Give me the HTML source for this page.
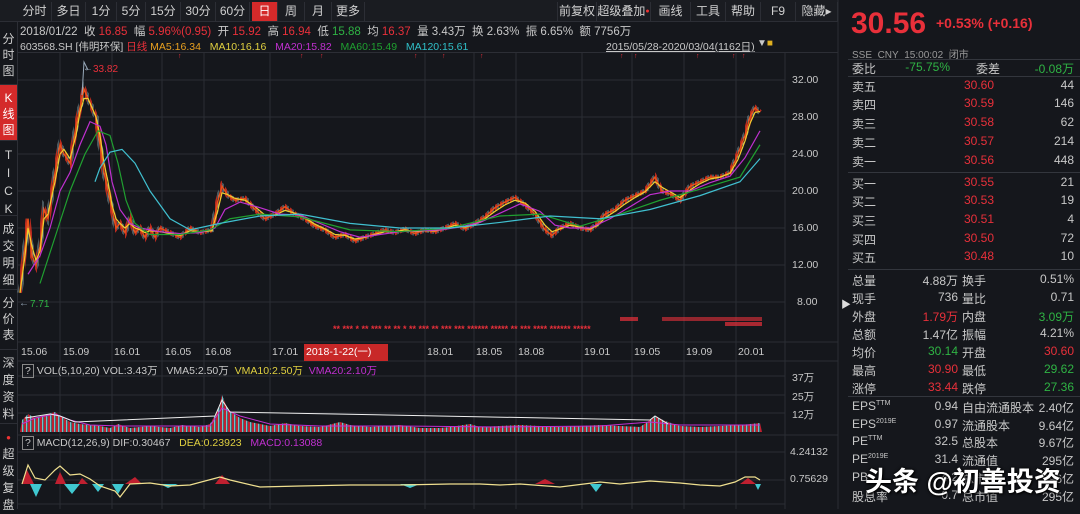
<!DOCTYPE html>
<html><head><meta charset="utf-8">
<style>
*{margin:0;padding:0;box-sizing:border-box}
body{width:1080px;height:509px;background:#15171c;overflow:hidden;position:relative;font-family:"Liberation Sans","Noto Sans CJK SC",sans-serif;color:#c8c8c8;font-size:11px}
.a{position:absolute;white-space:nowrap}
.r{color:#e8303a}.g{color:#2fb344}.y{color:#e0d040}.o{color:#e8a020}.m{color:#c030d0}.gg{color:#1fa030}.c{color:#30c0c8}
.tab{position:absolute;top:2px;height:19px;line-height:19px;font-size:12px;color:#d0d0d0;text-align:center;border-right:1px solid #2c2e35}
.side{position:absolute;left:0;width:17px;font-size:12px;color:#d0d0d0;text-align:center;line-height:16px;border-bottom:1px solid #2c2e35}
.row{position:absolute;left:852px;width:222px;height:18px;font-size:12px}
.row span{position:absolute}
</style></head><body>
<div class="a" style="left:0;top:0;width:838px;height:22px;background:#1a1c21;border-bottom:1px solid #2c2e35"></div>
<div class="tab" style="left:18px;width:34px">分时</div>
<div class="tab" style="left:52px;width:34px">多日</div>
<div class="tab" style="left:86px;width:31px">1分</div>
<div class="tab" style="left:117px;width:29px">5分</div>
<div class="tab" style="left:146px;width:35px">15分</div>
<div class="tab" style="left:181px;width:35px">30分</div>
<div class="tab" style="left:216px;width:34px">60分</div>
<div class="tab" style="left:252px;width:26px;background:#d42a2a;color:#fff">日</div>
<div class="tab" style="left:278px;width:27px">周</div>
<div class="tab" style="left:305px;width:27px">月</div>
<div class="tab" style="left:332px;width:33px">更多</div>
<div class="tab" style="left:557px;width:40px;border-left:1px solid #2c2e35">前复权</div>
<div class="tab" style="left:597px;width:54px">超级叠加<span style="color:#e33;font-size:7px;vertical-align:top">●</span></div>
<div class="tab" style="left:651px;width:40px">画线</div>
<div class="tab" style="left:691px;width:35px">工具</div>
<div class="tab" style="left:726px;width:35px">帮助</div>
<div class="tab" style="left:761px;width:35px">F9</div>
<div class="tab" style="left:796px;width:42px">隐藏▸</div>

<div class="a" style="left:20px;top:23px;font-size:11.5px">2018/01/22&nbsp; 收 <span class="r">16.85</span>&nbsp; 幅 <span class="r">5.96%(0.95)</span>&nbsp; 开 <span class="r">15.92</span>&nbsp; 高 <span class="r">16.94</span>&nbsp; 低 <span class="g">15.88</span>&nbsp; 均 <span class="r">16.37</span>&nbsp; 量 3.43万&nbsp; 换 2.63%&nbsp; 振 6.65%&nbsp; 额 7756万</div>
<div class="a" style="left:20px;top:39px;font-size:10.5px">603568.SH [伟明环保] <span class="r">日线</span> <span class="o">MA5:16.34</span>&nbsp;&nbsp; <span class="y">MA10:16.16</span>&nbsp;&nbsp; <span class="m">MA20:15.82</span>&nbsp;&nbsp; <span class="gg">MA60:15.49</span>&nbsp;&nbsp; <span class="c">MA120:15.61</span></div>
<div class="a" style="left:606px;top:39px;font-size:10.5px;text-decoration:underline">2015/05/28-2020/03/04(1162日)</div>
<div class="a" style="left:757px;top:38px;font-size:10px">▼<span style="color:#e0b020">■</span></div>
<div class="a" style="left:18px;top:52px;width:820px;height:1px;background:#2c2e35"></div>

<div class="a" style="left:17px;top:22px;width:1px;height:487px;background:#2c2e35"></div>
<div class="side" style="top:25px;height:60px;padding-top:6px">分<br>时<br>图</div>
<div class="side" style="top:85px;height:56px;background:#d42a2a;color:#fff;padding-top:5px">K<br>线<br>图</div>
<div class="side" style="top:141px;height:75px;padding-top:5px;line-height:18px">T<br>I<br>C<br>K</div>
<div class="side" style="top:216px;height:74px;padding-top:5px;line-height:17px">成<br>交<br>明<br>细</div>
<div class="side" style="top:290px;height:60px;padding-top:5px">分<br>价<br>表</div>
<div class="side" style="top:352px;height:72px;padding-top:3px;line-height:17px">深<br>度<br>资<br>料</div>
<div class="side" style="top:424px;height:85px;padding-top:4px;line-height:17px;border:none"><span style="color:#e33;font-size:8px">●</span><br>超<br>级<br>复<br>盘</div>

<svg class="a" style="left:0;top:0" width="840" height="509">
<defs>
<pattern id="vp" width="4" height="10" patternUnits="userSpaceOnUse"><rect width="2" height="10" fill="#c02030"/><rect x="2" width="1.5" height="10" fill="#70c0c8"/></pattern>
<pattern id="cp" width="5" height="6" patternUnits="userSpaceOnUse"><rect width="2" height="6" fill="#e03020"/><rect x="2.5" width="1" height="6" fill="#9ab8c0"/></pattern>
</defs>
<g stroke="#2a2d34" stroke-width="1">
<line x1="18" y1="80" x2="785" y2="80"/><line x1="18" y1="117" x2="785" y2="117"/><line x1="18" y1="154" x2="785" y2="154"/><line x1="18" y1="191" x2="785" y2="191"/><line x1="18" y1="228" x2="785" y2="228"/><line x1="18" y1="265" x2="785" y2="265"/><line x1="18" y1="302" x2="785" y2="302"/>
<line x1="18" y1="342" x2="838" y2="342"/><line x1="18" y1="361" x2="838" y2="361"/><line x1="18" y1="376" x2="785" y2="376"/><line x1="18" y1="395" x2="785" y2="395"/><line x1="18" y1="413" x2="785" y2="413"/><line x1="18" y1="435" x2="838" y2="435"/><line x1="18" y1="452" x2="785" y2="452"/><line x1="18" y1="480" x2="785" y2="480"/><line x1="18" y1="504" x2="785" y2="504"/>
<line x1="60" y1="53" x2="60" y2="509"/><line x1="112" y1="53" x2="112" y2="509"/><line x1="162" y1="53" x2="162" y2="509"/><line x1="204" y1="53" x2="204" y2="509"/><line x1="270" y1="53" x2="270" y2="509"/><line x1="425" y1="53" x2="425" y2="509"/><line x1="474" y1="53" x2="474" y2="509"/><line x1="516" y1="53" x2="516" y2="509"/><line x1="582" y1="53" x2="582" y2="509"/><line x1="632" y1="53" x2="632" y2="509"/><line x1="684" y1="53" x2="684" y2="509"/><line x1="736" y1="53" x2="736" y2="509"/>
<line x1="785" y1="53" x2="785" y2="509"/><line x1="838" y1="0" x2="838" y2="509"/>
</g>
<g transform="translate(0,376) scale(1,-9.25)" fill="none">
<polyline vector-effect="non-scaling-stroke" stroke="url(#cp)" stroke-width="5" opacity=".8" points="20,9 25,14 28,17 32,13 36,12 40,14 44,18 48,17 55,22 60,25 64,24 70,23 76,27 80,29 84,31 88,30 92,29 96,28 100,25 104,22 108,20 112,18 116,16 120,16.5 125,15.5 130,17 135,15.5 140,16 145,15 150,16 155,15 160,16 170,15.5 180,15 190,16 200,15.5 212,15.8 218,19 222,20.5 228,19.5 235,19 245,19.2 255,18 265,17 275,17.5 285,18.3 295,17.5 305,17 315,16.2 325,15.8 335,15 345,15.3 355,14.6 365,15 375,15.4 385,15.8 395,15.5 405,15.9 415,15.4 425,15.8 435,15.6 445,16 455,16.5 465,15.9 475,16.5 485,17.2 495,18.2 505,18.8 515,19.3 525,18.5 535,17.5 545,15.8 552,15.2 560,16 570,16.5 580,16 590,15.8 598,16.5 605,17.5 615,18 625,19 635,19.5 645,20 655,21.5 662,20 672,19.6 680,19 690,20.5 700,21 710,21.5 720,21.5 730,22 738,24 745,26 750,28 755,29 760,28.5"/>
<polyline vector-effect="non-scaling-stroke" stroke="#e8501a" stroke-width="1.5" points="20,9 25,14 28,17 32,13 36,12 40,14 44,18 48,17 55,22 60,25 64,24 70,23 76,27 80,29 84,31 88,30 92,29 96,28 100,25 104,22 108,20 112,18 116,16 120,16.5 125,15.5 130,17 135,15.5 140,16 145,15 150,16 155,15 160,16 170,15.5 180,15 190,16 200,15.5 212,15.8 218,19 222,20.5 228,19.5 235,19 245,19.2 255,18 265,17 275,17.5 285,18.3 295,17.5 305,17 315,16.2 325,15.8 335,15 345,15.3 355,14.6 365,15 375,15.4 385,15.8 395,15.5 405,15.9 415,15.4 425,15.8 435,15.6 445,16 455,16.5 465,15.9 475,16.5 485,17.2 495,18.2 505,18.8 515,19.3 525,18.5 535,17.5 545,15.8 552,15.2 560,16 570,16.5 580,16 590,15.8 598,16.5 605,17.5 615,18 625,19 635,19.5 645,20 655,21.5 662,20 672,19.6 680,19 690,20.5 700,21 710,21.5 720,21.5 730,22 738,24 745,26 750,28 755,29 760,28.5"/>
<polyline vector-effect="non-scaling-stroke" stroke="#f0d030" stroke-width="1.2" points="20,9 25,13 28,16 32,14 36,12.5 40,13.5 44,17 48,17.5 55,21 60,24 64,24.5 70,23.5 76,26 80,28.5 84,30 88,30 92,29 96,28 100,26 104,23 108,21 112,18.5 116,17 120,16.5 125,16 130,16.5 135,16 140,15.8 145,15.5 150,15.7 160,15.6 170,15.4 180,15.2 190,15.7 200,15.6 212,15.7 218,18 222,19.8 228,19.6 235,19.2 245,19 255,18.3 265,17.4 275,17.4 285,17.9 295,17.6 305,17.1 315,16.4 325,15.9 335,15.3 345,15.2 355,14.8 365,15 375,15.3 385,15.6 395,15.6 405,15.8 415,15.6 425,15.7 435,15.7 445,15.9 455,16.3 465,16.1 475,16.4 485,17 495,17.8 505,18.5 515,19 525,18.7 535,17.8 545,16.3 552,15.6 560,15.9 570,16.3 580,16.1 590,15.9 598,16.3 605,17.1 615,17.8 625,18.6 635,19.3 645,19.9 655,21 662,20.4 672,19.8 680,19.3 690,20.1 700,20.8 710,21.3 720,21.5 730,21.9 738,23.4 745,25.4 750,27.3 755,28.5 760,28.6"/>
<polyline vector-effect="non-scaling-stroke" stroke="#c030d0" stroke-width="1.2" points="28,11 40,13 50,16 60,20 70,22 80,25 90,27.5 100,27 106,25 112,21 120,18 130,16.5 140,16 160,15.6 180,15.4 200,15.5 215,16 225,18 240,18.8 260,18.2 280,17.5 300,17.4 320,16.5 340,15.6 360,15 380,15.3 400,15.6 420,15.7 440,15.8 460,16.1 480,16.6 500,17.6 520,18.6 540,17.8 555,16.3 570,16 590,16 610,17 630,18.3 650,19.6 670,20 690,20 710,20.9 730,21.6 745,23.6 760,26.5"/>
<polyline vector-effect="non-scaling-stroke" stroke="#20a030" stroke-width="1.2" points="40,10 55,15 70,20 85,24 98,26.5 110,26 118,23 126,19 135,16.5 150,15.3 180,15.3 210,15.8 230,17 260,17.5 300,17.2 350,15.8 400,15.6 450,16 500,17.3 540,17.5 580,16.2 620,17.5 660,19 700,20.2 740,21.5 760,25"/>
<polyline vector-effect="non-scaling-stroke" stroke="#40c0d0" stroke-width="1.2" points="95,21 100,22.5 110,24.2 122,24.5 135,23 150,20 170,17 190,15.8 220,16.5 260,17.3 300,17.5 350,16.5 400,16 450,16 500,16.6 550,17.3 600,17 650,18 700,19.5 740,21 760,23.5"/>
</g>
<polyline fill="none" stroke="#9ab" stroke-width="1" points="82,95 84,62 88,70"/>
<text x="83" y="71" fill="#9ab" font-size="10">←</text>
<text x="93" y="72" fill="#e8303a" font-size="10">33.82</text>
<text x="19" y="306" fill="#9ab" font-size="10">←</text>
<text x="30" y="307" fill="#2fb344" font-size="10">7.71</text>
<g fill="#e8303a" font-size="7">
<text x="178" y="58">↑</text><text x="300" y="58">↑</text><text x="320" y="58">↑</text><text x="414" y="58">↑</text><text x="442" y="58">↑</text><text x="480" y="58">↑</text><text x="620" y="58">↑</text><text x="634" y="58">↑</text><text x="696" y="58">↑</text><text x="732" y="58">↑</text><text x="742" y="58">↑</text>
</g>
<text x="333" y="332" fill="#e8303a" font-size="9" font-weight="bold">** ***  * ** *** ** ** * ** *** ** *** *** ****** ***** ** *** **** ****** *****</text>
<rect x="620" y="317" width="18" height="4" fill="#e8303a" opacity=".7"/><rect x="662" y="317" width="100" height="4" fill="#e8303a" opacity=".6"/><rect x="725" y="322" width="37" height="4" fill="#e8303a" opacity=".7"/>
<polygon fill="url(#vp)" points="20,432 22,420 28,414 35,418 45,415 55,412 60,416 70,422 80,424 100,426 110,428 118,424 130,428 150,426 170,428 182,425 200,427 210,424 218,410 222,395 228,410 240,418 250,422 270,426 285,423 300,426 320,427 340,422 350,425 370,427 400,425 420,428 440,428 450,427 470,424 480,427 520,425 540,426 560,427 600,425 620,426 640,427 650,420 655,416 665,421 680,426 700,427 720,426 740,425 760,423 762,432"/>
<polyline fill="none" stroke="#c030d0" stroke-width="1" points="22,424 35,418 55,414 70,420 90,425 120,426 180,426 210,426 222,408 240,416 270,424 320,426 400,426 500,427 600,426 650,422 680,425 760,425"/>
<polyline fill="none" stroke="#eee" stroke-width="1" points="25,418 50,414 60,416 75,422 215,416 222,400 230,412 650,420 655,416 668,424"/>
<g fill="#c02030"><polygon points="22,484 27,470 34,484"/><polygon points="55,484 60,472 66,484"/><polygon points="78,484 82,478 88,484"/><polygon points="125,484 135,477 142,484"/><polygon points="215,484 222,475 230,484"/><polygon points="535,484 545,479 555,484"/><polygon points="740,484 748,478 756,484"/></g>
<g fill="#40c8d0"><polygon points="30,484 36,497 42,484"/><polygon points="64,484 72,494 80,484"/><polygon points="92,484 98,492 104,484"/><polygon points="112,484 118,494 124,484"/><polygon points="160,484 168,488 178,484"/><polygon points="400,484 410,488 420,484"/><polygon points="590,484 596,492 602,484"/><polygon points="755,484 758,490 761,484"/></g>
<polyline fill="none" stroke="#f0e090" stroke-width="1.2" points="22,484 28,465 35,478 45,480 55,470 60,466 70,475 80,474 90,479 100,486 115,491 120,497 130,484 150,483 170,486 190,485 220,477 230,480 260,487 300,486 350,485 400,485 450,484 480,484 500,485 520,484 560,487 600,482 620,484 650,481 680,483 700,485 720,486 735,482 745,477 755,477 760,480"/>
</svg>

<div class="a" style="left:792px;top:74px;font-size:10.5px;line-height:12px">32.00</div>
<div class="a" style="left:792px;top:111px;font-size:10.5px">28.00</div>
<div class="a" style="left:792px;top:148px;font-size:10.5px">24.00</div>
<div class="a" style="left:792px;top:185px;font-size:10.5px">20.00</div>
<div class="a" style="left:792px;top:222px;font-size:10.5px">16.00</div>
<div class="a" style="left:792px;top:259px;font-size:10.5px">12.00</div>
<div class="a" style="left:797px;top:296px;font-size:10.5px">8.00</div>
<div class="a" style="left:792px;top:370px;font-size:10.5px">37万</div>
<div class="a" style="left:792px;top:389px;font-size:10.5px">25万</div>
<div class="a" style="left:792px;top:407px;font-size:10.5px">12万</div>
<div class="a" style="left:790px;top:446px;font-size:10.5px">4.24132</div>
<div class="a" style="left:790px;top:473px;font-size:10.5px">0.75629</div>
<div class="a" style="left:841px;top:296px;font-size:10px;color:#ddd">▶</div>

<div class="a" style="left:21px;top:346px;font-size:10.5px">15.06</div>
<div class="a" style="left:63px;top:346px;font-size:10.5px">15.09</div>
<div class="a" style="left:114px;top:346px;font-size:10.5px">16.01</div>
<div class="a" style="left:165px;top:346px;font-size:10.5px">16.05</div>
<div class="a" style="left:205px;top:346px;font-size:10.5px">16.08</div>
<div class="a" style="left:272px;top:346px;font-size:10.5px">17.01</div>
<div class="a" style="left:304px;top:344px;width:84px;height:17px;background:#c82828;color:#fff;font-size:10.5px;line-height:17px;padding-left:2px">2018-1-22(一)</div>
<div class="a" style="left:427px;top:346px;font-size:10.5px">18.01</div>
<div class="a" style="left:476px;top:346px;font-size:10.5px">18.05</div>
<div class="a" style="left:518px;top:346px;font-size:10.5px">18.08</div>
<div class="a" style="left:584px;top:346px;font-size:10.5px">19.01</div>
<div class="a" style="left:634px;top:346px;font-size:10.5px">19.05</div>
<div class="a" style="left:686px;top:346px;font-size:10.5px">19.09</div>
<div class="a" style="left:738px;top:346px;font-size:10.5px">20.01</div>

<div class="a" style="left:22px;top:363px;font-size:10.5px"><span style="border:1px solid #888;padding:0 2px">?</span> VOL(5,10,20) VOL:3.43万&nbsp;&nbsp; VMA5:2.50万&nbsp;&nbsp;<span class="y">VMA10:2.50万</span>&nbsp;&nbsp;<span class="m">VMA20:2.10万</span></div>
<div class="a" style="left:22px;top:437px;font-size:10.5px"><span style="border:1px solid #888;padding:0 2px">?</span> MACD(12,26,9) DIF:0.30467&nbsp;&nbsp; <span class="y">DEA:0.23923</span>&nbsp;&nbsp; <span class="m">MACD:0.13088</span></div>

<div class="a r" style="left:851px;top:6px;font-size:30px;font-weight:bold;line-height:36px">30.56</div>
<div class="a r" style="left:936px;top:15px;font-size:14px;font-weight:bold">+0.53% (+0.16)</div>
<div class="a" style="left:852px;top:46px;font-size:10px;color:#999">SSE&nbsp; CNY&nbsp; 15:00:02&nbsp; 闭市</div>
<div class="a" style="left:848px;top:59px;width:232px;height:1px;background:#33363d"></div>
<div class="row" style="top:60px"><span>委比</span><span class="g" style="right:124px">-75.75%</span><span style="left:124px">委差</span><span class="g" style="right:0">-0.08万</span></div>
<div class="a" style="left:848px;top:76px;width:232px;height:1px;background:#33363d"></div>
<div class="row" style="top:78px"><span>卖五</span><span class="r" style="left:112px">30.60</span><span style="right:0">44</span></div>
<div class="row" style="top:96px"><span>卖四</span><span class="r" style="left:112px">30.59</span><span style="right:0">146</span></div>
<div class="row" style="top:115px"><span>卖三</span><span class="r" style="left:112px">30.58</span><span style="right:0">62</span></div>
<div class="row" style="top:134px"><span>卖二</span><span class="r" style="left:112px">30.57</span><span style="right:0">214</span></div>
<div class="row" style="top:153px"><span>卖一</span><span class="r" style="left:112px">30.56</span><span style="right:0">448</span></div>
<div class="a" style="left:848px;top:172px;width:232px;height:1px;background:#33363d"></div>
<div class="row" style="top:175px"><span>买一</span><span class="r" style="left:112px">30.55</span><span style="right:0">21</span></div>
<div class="row" style="top:193px"><span>买二</span><span class="r" style="left:112px">30.53</span><span style="right:0">19</span></div>
<div class="row" style="top:212px"><span>买三</span><span class="r" style="left:112px">30.51</span><span style="right:0">4</span></div>
<div class="row" style="top:231px"><span>买四</span><span class="r" style="left:112px">30.50</span><span style="right:0">72</span></div>
<div class="row" style="top:249px"><span>买五</span><span class="r" style="left:112px">30.48</span><span style="right:0">10</span></div>
<div class="a" style="left:848px;top:269px;width:232px;height:1px;background:#33363d"></div>
<div class="row" style="top:272px"><span>总量</span><span style="right:116px">4.88万</span><span style="left:110px">换手</span><span style="right:0">0.51%</span></div>
<div class="row" style="top:290px"><span>现手</span><span style="right:116px">736</span><span style="left:110px">量比</span><span style="right:0">0.71</span></div>
<div class="row" style="top:308px"><span>外盘</span><span class="r" style="right:116px">1.79万</span><span style="left:110px">内盘</span><span class="g" style="right:0">3.09万</span></div>
<div class="row" style="top:326px"><span>总额</span><span style="right:116px">1.47亿</span><span style="left:110px">振幅</span><span style="right:0">4.21%</span></div>
<div class="row" style="top:344px"><span>均价</span><span class="g" style="right:116px">30.14</span><span style="left:110px">开盘</span><span class="r" style="right:0">30.60</span></div>
<div class="row" style="top:362px"><span>最高</span><span class="r" style="right:116px">30.90</span><span style="left:110px">最低</span><span class="g" style="right:0">29.62</span></div>
<div class="row" style="top:380px"><span>涨停</span><span class="r" style="right:116px">33.44</span><span style="left:110px">跌停</span><span class="g" style="right:0">27.36</span></div>
<div class="a" style="left:848px;top:396px;width:232px;height:1px;background:#33363d"></div>
<div class="row" style="top:399px"><span>EPS<sup style="font-size:7px">TTM</sup></span><span style="right:116px">0.94</span><span style="left:110px">自由流通股本</span><span style="right:0">2.40亿</span></div>
<div class="row" style="top:417px"><span>EPS<sup style="font-size:7px">2019E</sup></span><span style="right:116px">0.97</span><span style="left:110px">流通股本</span><span style="right:0">9.64亿</span></div>
<div class="row" style="top:434px"><span>PE<sup style="font-size:7px">TTM</sup></span><span style="right:116px">32.5</span><span style="left:110px">总股本</span><span style="right:0">9.67亿</span></div>
<div class="row" style="top:452px"><span>PE<sup style="font-size:7px">2019E</sup></span><span style="right:116px">31.4</span><span style="left:110px">流通值</span><span style="right:0">295亿</span></div>
<div class="row" style="top:470px"><span>PB</span><span style="right:116px">4.2</span><span style="left:110px">总市值</span><span style="right:0">296亿</span></div>
<div class="row" style="top:488px"><span>股息率</span><span style="right:116px">0.7</span><span style="left:110px">总市值</span><span style="right:0">295亿</span></div>
<div class="a" style="left:865px;top:460px;font-size:27px;color:#fff;font-weight:bold;text-shadow:0 0 3px #000,1px 1px 2px #000">头条 @初善投资</div>
</body></html>
